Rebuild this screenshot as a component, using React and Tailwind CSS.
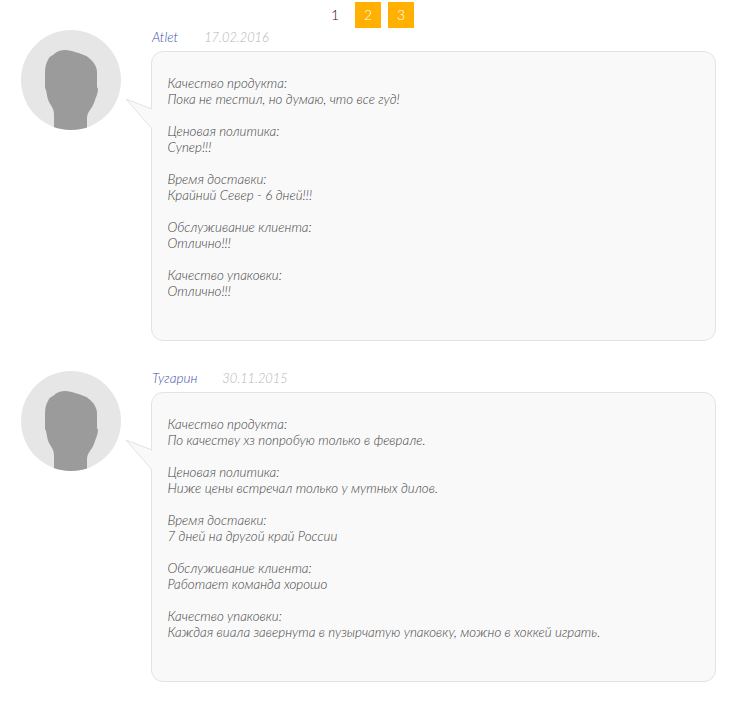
import React from 'react';

const reviews = [
  {
    name: 'Atlet',
    date: '17.02.2016',
    gap: 'ml-[26px]',
    items: [
      ['Качество продукта:', 'Пока не тестил, но думаю, что все гуд!'],
      ['Ценовая политика:', 'Супер!!!'],
      ['Время доставки:', 'Крайний Север - 6 дней!!!'],
      ['Обслуживание клиента:', 'Отлично!!!'],
      ['Качество упаковки:', 'Отлично!!!'],
    ],
  },
  {
    name: 'Тугарин',
    date: '30.11.2015',
    gap: 'ml-[25px]',
    items: [
      ['Качество продукта:', 'По качеству хз попробую только в феврале.'],
      ['Ценовая политика:', 'Ниже цены встречал только у мутных дилов.'],
      ['Время доставки:', '7 дней на другой край России'],
      ['Обслуживание клиента:', 'Работает команда хорошо'],
      ['Качество упаковки:', 'Каждая виала завернута в пузырчатую упаковку, можно в хоккей играть.'],
    ],
  },
];

const Avatar = () => (
  <svg width="100" height="100" viewBox="0 0 100 100" className="shrink-0">
    <defs>
      <clipPath id="round">
        <circle cx="50" cy="50" r="50" />
      </clipPath>
    </defs>
    <circle cx="50" cy="50" r="50" fill="#e6e6e6" />
    <path
      clipPath="url(#round)"
      fill="#9b9b9b"
      d="M33 105 L33 85 C33 81 32 79 31 77 L28 72 C26 68 26 64 25 60 L24 58 L24 43 C24 37 25 33 27 30 C28 27 30 26 32 25 C36 21 40 20 44 20 C48 20 51 21 54 22 C60 24 65 25 68 28 C73 32 76 37 76 42 L76 57 L77 59 C77 63 75 67 74 70 C73 74 71 77 69 80 C67 83 66 85 66 88 L66 105 Z"
    />
  </svg>
);

const Review = ({ review }) => (
  <div className="flex h-[311px] pl-[21px] pr-[19px]">
    <Avatar />
    <div className="ml-[30px] flex-1">
      <div className="flex h-[21px] items-start text-[13px] leading-[15px] italic font-light pl-px">
        <span className="text-[13.5px] text-[#3f50a8]">{review.name}</span>
        <span className={`${review.gap} text-[12.8px] text-[#b5b5b5]`}>{review.date}</span>
      </div>
      <div className="relative h-[290px] rounded-[12px] border border-[#e3e3e3] bg-[#f9f9f9] pl-[15.5px] pr-4 pt-[23px] text-[13.36px] leading-4 italic font-light text-[#3f3f3f]">
        {/* хвостик */}
        <svg width="28" height="32" viewBox="0 0 28 32" className="absolute left-[-27px] top-[46px]">
          <path d="M1 1 L27 11 L27 31 Z" fill="#f9f9f9" />
          <path d="M27 11 L1 1 L27 31" fill="none" stroke="#e3e3e3" />
        </svg>
        {review.items.map((item, index) => (
          <div key={index} className="mb-4">
            <div>{item[0]}</div>
            <div>{item[1]}</div>
          </div>
        ))}
      </div>
    </div>
  </div>
);

export default function App() {
  return (
    <div className="h-[701px] bg-white font-['Lato','Open_Sans',sans-serif]">
      <div className="flex h-[30px] items-start pt-[2px] pl-[322px] text-sm font-light">
        <span className="flex h-[26px] w-[26px] items-center justify-center text-[#222]">1</span>
        <span className="ml-[7px] flex h-[26px] w-[26px] items-center justify-center bg-[#ffb000] text-white">2</span>
        <span className="ml-[7px] flex h-[26px] w-[26px] items-center justify-center bg-[#ffb000] text-white">3</span>
      </div>
      <div className="flex flex-col gap-[30px]">
        {reviews.map((review) => (
          <Review key={review.name} review={review} />
        ))}
      </div>
    </div>
  );
}
